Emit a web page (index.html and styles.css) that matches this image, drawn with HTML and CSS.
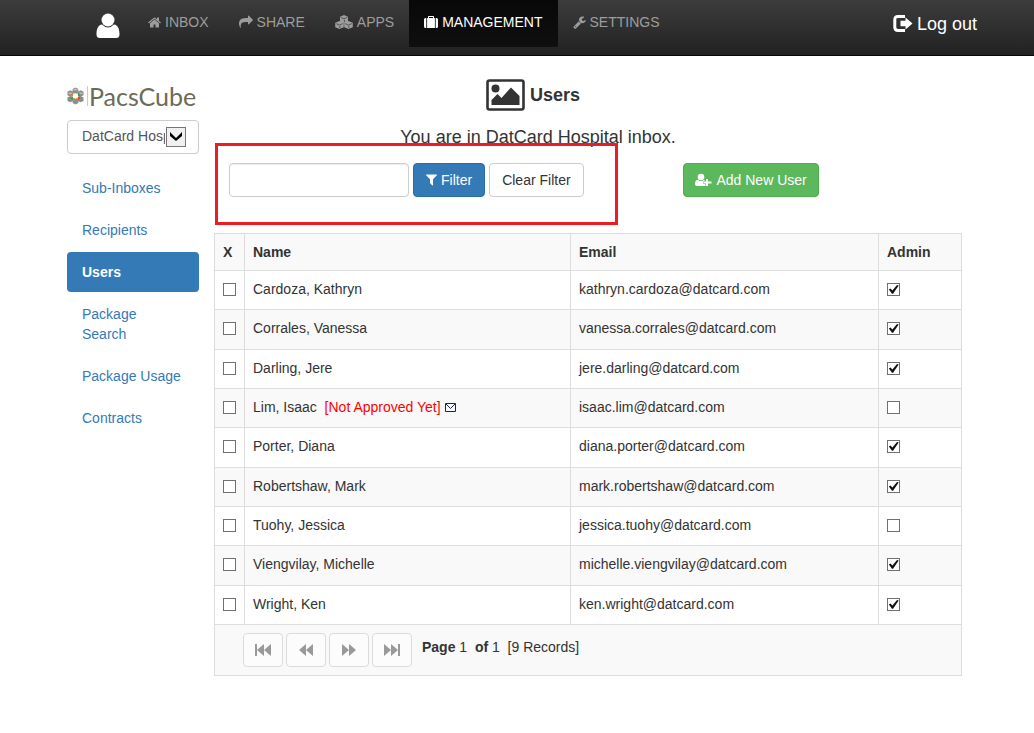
FILE: index.html
```
<!DOCTYPE html>
<html lang="en">
<head>
    <meta charset="UTF-8">
    <meta name="viewport" content="width=device-width, initial-scale=1.0">
    <title>PacsCube - Users</title>
    <link rel="stylesheet" href="styles.css">
</head>
<body>
    <!-- Top bar -->
    <header class="navbar">
        <svg class="avatar" viewBox="0 0 24 26"><ellipse cx="12" cy="7" rx="6.500" ry="6.500"/><path d="M6 11.500C2 12 .5 16 .5 21.500Q.5 25 4 25H20Q23.500 25 23.500 21.500C23.500 16 22 12 18 11.500Q12 17.500 6 11.500Z"/></svg>
        <nav class="top-menu">
            <a href="#"><svg class="icon icon-home" viewBox="64 128 1664 1536"><path d="M1472 992v480q0 26-19 45t-45 19h-384v-384h-256v384h-384q-26 0-45-19t-19-45v-480q0-1 .5-3t.5-3l575-474 575 474q1 2 1 6zm223-69l-62 74q-8 9-21 11h-3q-13 0-21-7l-692-577-692 577q-12 8-24 7-13-2-21-11l-62-74q-8-10-7-23.500t11-21.500l719-599q32-26 76-26t76 26l244 204v-195q0-14 9-23t23-9h192q14 0 23 9t9 23v408l219 182q10 8 11 21.500t-7 23.500z"/></svg>INBOX</a>
            <a href="#"><svg class="icon" viewBox="0 0 1792 1792"><path d="M1792 640q0 26-19 45l-512 512q-19 19-45 19t-45-19-19-45v-256h-224q-98 0-175.500 6t-154 21.500-133 42.500-105.500 69.500-80 101-48.500 138.500-17.500 181q0 55 5 123 0 6 2.500 23.500t2.500 26.500q0 15-8.500 25t-23.500 10q-16 0-28-17-7-9-13-22t-13.500-30-10.500-24q-127-285-127-451 0-199 53-333 162-403 875-403h224v-256q0-26 19-45t45-19 45 19l512 512q19 19 19 45z"/></svg>SHARE</a>
            <a href="#"><svg class="icon icon-cubes" viewBox="0 0 18 14"><path d="M9 0l4 1.800v4.400L9 8 5 6.200V1.800zM4.500 6l4.300 1.800v4.500L4.500 14 .2 12.300V7.800zM13.500 6l4.300 1.800v4.500L13.500 14l-4.300-1.700V7.800z"/><path class="cube-edge" d="M5.800 2.400L9 3.800l3.200-1.400M9.400 4.800v2.400M1.300 8.700l3.200 1.400 3.200-1.400M4.900 11v2.100M10.300 8.700l3.200 1.400 3.200-1.400M13.900 11v2.100"/></svg>APPS</a>
            <a href="#" class="active"><svg class="icon" viewBox="0 0 14 14"><path d="M2.300 3v10H1.500Q0 13 0 11.500v-7Q0 3 1.500 3zM11.700 3h.8Q14 3 14 4.500v7q0 1.500-1.500 1.500h-.8zM3.100 13V3H4V1.700Q4 1 4.700 1h4.600q.7 0 .7.700V3h.9v10zM5 2v1h4V2z"/></svg>MANAGEMENT</a>
            <a href="#"><svg class="icon icon-home" viewBox="64 64 1664 1728"><path d="M448 1472q0-26-19-45t-45-19-45 19-19 45 19 45 45 19 45-19 19-45zm644-420l-682 682q-37 37-90 37-52 0-91-37l-106-108q-38-36-38-90 0-53 38-91l681-681q39 98 114.500 173.500t173.500 114.500zm634-435q0 39-23 106-47 134-164.500 217.500t-258.500 83.500q-185 0-316.500-131.500t-131.500-316.500 131.500-316.500 316.500-131.500q58 0 121.500 16.500t107.500 46.500q16 11 16 28t-16 28l-293 169v224l193 107q5-3 79-48.500t135.500-81 70.500-35.500q15 0 23.500 10t8.500 25z"/></svg>SETTINGS</a>
        </nav>
        <a href="#" class="logout"><svg viewBox="0 0 20 18"><path d="M12 1.500H5Q1.800 1.500 1.800 4.700v7.600q0 3.200 3.200 3.200H12" fill="none" stroke="currentColor" stroke-width="3"/><path d="M7.500 5.800h5V2.500L19.500 8.500l-7 6v-3.300h-5z"/></svg>Log out</a>
    </header>

    <div class="container">
        <!-- Left menu -->
        <aside class="sidebar">
            <div class="logo">
                <svg viewBox="0 0 18 18"><g fill="#8d8d8a"><path d="M9 0l3 1.500v4L9 7 6 5.500v-4zM3.500 3l3 1.500v3.800l-3 1.200-3-1.200V4.500zM14.500 3l3 1.500v3.800l-3 1.200-3-1.200V4.500zM3.500 9l3 1.500v3.800l-3 1.200-3-1.200v-3.800zM14.500 9l3 1.500v3.800l-3 1.200-3-1.200v-3.800zM9 11l3 1.500v4L9 18l-3-1.500v-4z"/></g><path d="M3.500 5l3 1-3 1.500-3-1.500zM14.500 5l3 1-3 1.500-3-1.500zM9 1l3 1.200-3 1.300-3-1.300z" fill="#bbb"/><path d="M4 7.500L6.500 5.500v3.500L4 10z" fill="#ef7d2d"/><path d="M6.500 5L9 6.500 11.500 5v2.500h-5z" fill="#e3b43c"/><path d="M11.500 5.500L14 7v3l-2.500-1z" fill="#2fa55b"/><path d="M4 10l2.500-.5V13L4 12z" fill="#2fa55b"/><path d="M11.500 9.500L14 10v2l-2.500 1z" fill="#e2442f"/><path d="M6.500 10.500h5V13L9 12l-2.500 1z" fill="#ef8a2d"/><path d="M9 6l2.500 1.500v3L9 12l-2.500-1.500v-3z" fill="#fff"/></svg>
                <span>PacsCube</span>
            </div>
            <div class="inbox-select">
                <select aria-label="Inbox">
                    <option>DatCard Hospital</option>
                </select>
                <svg class="select-arrow" viewBox="0 0 18 18"><path d="M3 4l6 6 6-6v4l-6 5-6-5z"/></svg>
            </div>
            <nav class="side-menu">
                <a href="#">Sub-Inboxes</a>
                <a href="#">Recipients</a>
                <a href="#" class="active">Users</a>
                <a href="#">Package<br>Search</a>
                <a href="#">Package Usage</a>
                <a href="#">Contracts</a>
            </nav>
        </aside>

        <main>
            <div class="page-title">
                <h1><svg viewBox="0 0 39 32"><rect x="1.500" y="1.500" width="36" height="29" rx="2" fill="none" stroke="currentColor" stroke-width="2.600"/><circle cx="9.500" cy="9.500" r="4"/><path d="M5.500 26v-5l6-6 4 4L25 8.500l8.500 8.500v9z"/></svg>Users</h1>
                <p>You are in DatCard Hospital inbox.</p>
            </div>

            <div class="toolbar">
                <form class="filter-form">
                    <input type="text" class="form-control" aria-label="Filter users">
                    <button type="button" class="btn btn-primary"><svg viewBox="192 192 1408 1536"><path d="M1595 295q17 41-14 70l-493 493v742q0 42-39 59-13 5-25 5-27 0-45-19l-256-256q-19-19-19-45v-486l-493-493q-31-29-14-70 17-39 59-39h1280q42 0 59 39z"/></svg>Filter</button>
                    <button type="button" class="btn btn-default">Clear Filter</button>
                    <div class="highlight"></div>
                </form>
                <button type="button" class="btn btn-success"><svg class="icon-add" viewBox="0 0 17 14"><circle cx="6" cy="4" r="3.300"/><path d="M3 6.800Q0 7 0 11.200 0 13 2 13h8.500v-2H8.500V8H9.500V7.100L9 6.800Q6 9.400 3 6.800zM11 6h2v2.500h3.500v2H13V13h-2v-2.500H9v-2h2z"/></svg>Add New User</button>
            </div>

            <table class="users">
                <thead>
                    <tr><th class="col-check">X</th><th class="col-name">Name</th><th class="col-email">Email</th><th>Admin</th></tr>
                </thead>
                <tbody>
                    <tr>
                        <td><input type="checkbox" aria-label="Select Kathryn Cardoza"></td>
                        <td>Cardoza, Kathryn</td>
                        <td>kathryn.cardoza@datcard.com</td>
                        <td><input type="checkbox" aria-label="Admin" checked></td>
                    </tr>
                    <tr>
                        <td><input type="checkbox" aria-label="Select Vanessa Corrales"></td>
                        <td>Corrales, Vanessa</td>
                        <td>vanessa.corrales@datcard.com</td>
                        <td><input type="checkbox" aria-label="Admin" checked></td>
                    </tr>
                    <tr>
                        <td><input type="checkbox" aria-label="Select Jere Darling"></td>
                        <td>Darling, Jere</td>
                        <td>jere.darling@datcard.com</td>
                        <td><input type="checkbox" aria-label="Admin" checked></td>
                    </tr>
                    <tr>
                        <td><input type="checkbox" aria-label="Select Isaac Lim"></td>
                        <td>Lim, Isaac&nbsp; <span class="pending">[Not Approved Yet]</span> <svg class="mail" viewBox="0 0 11 9"><path d="M.5.5h10v8H.5zM1 1l4.500 4.500L10 1"/></svg></td>
                        <td>isaac.lim@datcard.com</td>
                        <td><input type="checkbox" aria-label="Admin"></td>
                    </tr>
                    <tr>
                        <td><input type="checkbox" aria-label="Select Diana Porter"></td>
                        <td>Porter, Diana</td>
                        <td>diana.porter@datcard.com</td>
                        <td><input type="checkbox" aria-label="Admin" checked></td>
                    </tr>
                    <tr>
                        <td><input type="checkbox" aria-label="Select Mark Robertshaw"></td>
                        <td>Robertshaw, Mark</td>
                        <td>mark.robertshaw@datcard.com</td>
                        <td><input type="checkbox" aria-label="Admin" checked></td>
                    </tr>
                    <tr>
                        <td><input type="checkbox" aria-label="Select Jessica Tuohy"></td>
                        <td>Tuohy, Jessica</td>
                        <td>jessica.tuohy@datcard.com</td>
                        <td><input type="checkbox" aria-label="Admin"></td>
                    </tr>
                    <tr>
                        <td><input type="checkbox" aria-label="Select Michelle Viengvilay"></td>
                        <td>Viengvilay, Michelle</td>
                        <td>michelle.viengvilay@datcard.com</td>
                        <td><input type="checkbox" aria-label="Admin" checked></td>
                    </tr>
                    <tr>
                        <td><input type="checkbox" aria-label="Select Ken Wright"></td>
                        <td>Wright, Ken</td>
                        <td>ken.wright@datcard.com</td>
                        <td><input type="checkbox" aria-label="Admin" checked></td>
                    </tr>
                </tbody>
                <tfoot>
                    <tr>
                        <td colspan="4">
                            <div class="pager">
                                <button type="button" class="btn btn-default" aria-label="First page" disabled><svg viewBox="0 0 16 12"><path d="M0 0h2v12H0zM9 0v12L2 6zM16 0v12L9 6z"/></svg></button>
                                <button type="button" class="btn btn-default" aria-label="Previous page" disabled><svg viewBox="0 0 16 12"><path d="M8 0v12L1 6zM15 0v12L8 6z"/></svg></button>
                                <button type="button" class="btn btn-default" aria-label="Next page" disabled><svg viewBox="0 0 16 12"><path d="M1 0v12l7-6zM8 0v12l7-6z"/></svg></button>
                                <button type="button" class="btn btn-default" aria-label="Last page" disabled><svg viewBox="0 0 16 12"><path d="M0 0v12l7-6zM7 0v12l7-6zM14 0h2v12h-2z"/></svg></button>
                                <p><b>Page</b> 1&nbsp; <b>of</b> 1&nbsp; [9 Records]</p>
                            </div>
                        </td>
                    </tr>
                </tfoot>
            </table>
        </main>
    </div>
</body>
</html>
```
FILE: styles.css
```
* {
    box-sizing: border-box;
}

body {
    margin: 0;
    font-family: "Liberation Sans", Arial, sans-serif;
    font-size: 14px;
    line-height: 20px;
    color: #333;
    background: #fff;
}

a {
    color: #337ab7;
    text-decoration: none;
}

svg {
    fill: currentColor;
}

h1, p {
    margin: 0;
}

/* Top bar */
.navbar {
    display: flex;
    align-items: flex-start;
    height: 56px;
    padding: 0 57px 0 96px;
    background: linear-gradient(#3c3c3c, #222);
    border-bottom: 1px solid #080808;
}

.avatar {
    width: 24px;
    height: 26px;
    margin: 13px 13px 0 0;
    color: #fff;
}

.top-menu {
    display: flex;
}

.top-menu a {
    display: flex;
    align-items: center;
    gap: 4px;
    padding: 12px 15px 15px;
    color: #9d9d9d;
}

.top-menu .active {
    color: #fff;
    background: linear-gradient(#080808, #0f0f0f);
}

.icon {
    width: 14px;
    height: 14px;
}

.icon-home {
    width: 13px;
    height: 13px;
}

.icon-cubes {
    width: 18px;
}

.cube-edge {
    fill: none;
    stroke: #333;
    stroke-width: 0.7;
}

.logout {
    display: flex;
    align-items: center;
    gap: 4px;
    margin-left: auto;
    padding-top: 14px;
    font-size: 18px;
    color: #fff;
}

.logout svg {
    width: 20px;
    height: 18px;
}

/* Page layout */
.container {
    display: grid;
    grid-template-columns: 132px minmax(0, 1fr);
    gap: 15px;
    padding: 22px 72px 40px 67px;
}

.logo {
    display: flex;
    align-items: center;
    gap: 3px;
    height: 36px;
    margin-bottom: 6px;
}

.logo svg {
    flex: none;
    width: 17px;
    height: 18px;
}

.logo span {
    padding-left: 1px;
    border-left: 1px solid #ccc;
    font-family: Lato, sans-serif;
    font-size: 25px;
    color: #6b6b58;
}

.inbox-select {
    position: relative;
    height: 34px;
    border: 1px solid #ccc;
    border-radius: 4px;
}

.inbox-select select {
    width: 100%;
    height: 32px;
    padding: 0 33px 2px 14px;
    appearance: none;
    border: 0;
    background: none;
    font: inherit;
    color: #555;
}

.select-arrow {
    position: absolute;
    top: 6px;
    right: 12px;
    width: 20px;
    height: 20px;
    border: 1px solid #777;
    background: #f0f0f0;
    color: #000;
    pointer-events: none;
}

.side-menu {
    display: flex;
    flex-direction: column;
    gap: 2px;
    margin-top: 14px;
}

.side-menu a {
    padding: 10px 15px;
    border-radius: 4px;
}

.side-menu .active {
    font-weight: bold;
    color: #fff;
    background: #337ab7;
}

/* Title and filter */
.page-title {
    padding-right: 100px;
    text-align: center;
    font-size: 18px;
}

.page-title h1 {
    display: flex;
    justify-content: center;
    align-items: center;
    gap: 5px;
    height: 33px;
    padding-right: 10px;
    font-size: 18px;
}

.page-title h1 svg {
    width: 39px;
    height: 32px;
}

.page-title p {
    padding: 16px 0;
}

.toolbar {
    display: flex;
    align-items: flex-start;
    height: 70px;
    padding: 0 0 0 15px;
}

.filter-form {
    position: relative;
    display: flex;
    flex: 0 0 62%;
    gap: 4px;
}

/* red frame drawn around the filter */
.highlight {
    position: absolute;
    top: -20px;
    left: -14px;
    width: 403px;
    height: 82px;
    border: 3px solid #ed1c24;
    pointer-events: none;
}

.form-control {
    width: 180px;
    height: 34px;
    padding: 6px 12px;
    border: 1px solid #ccc;
    border-radius: 4px;
    box-shadow: inset 0 1px 1px rgba(0,0,0,0.075);
    font: inherit;
}

.btn {
    display: flex;
    align-items: center;
    gap: 4px;
    height: 34px;
    padding: 6px 12px;
    border: 1px solid #ccc;
    border-radius: 4px;
    font: inherit;
    color: #333;
    white-space: nowrap;
    cursor: pointer;
}

.btn svg {
    width: 11px;
    height: 12px;
}

.btn .icon-add {
    width: 17px;
    height: 14px;
}

.btn-default {
    background: #fff;
}

.btn-primary {
    color: #fff;
    background: #337ab7;
    border-color: #2e6da4;
}

.btn-success {
    padding: 6px 11px;
    color: #fff;
    background: #5cb85c;
    border-color: #4cae4c;
}

/* Users table */
.users {
    width: 100%;
    table-layout: fixed;
    border-collapse: collapse;
    border: 1px solid #ddd;
}

.users th, .users td {
    padding: 8px;
    border: 1px solid #ddd;
    text-align: left;
    vertical-align: top;
}

.users th, .users tbody tr:nth-child(even), .users tfoot {
    background: #f9f9f9;
}

.users tbody tr {
    height: 39px;
}

.users tbody tr:nth-child(3n+2) {
    height: 40px;
}

.col-check {
    width: 30px;
}

.col-name {
    width: 326px;
}

.col-email {
    width: 308px;
}

.users input {
    display: grid;
    place-items: center;
    width: 13px;
    height: 13px;
    margin: 4px 0 0;
    appearance: none;
    border: 1px solid #707070;
    background: #fff;
}

.users input:checked::before {
    content: "";
    width: 11px;
    height: 11px;
    background: #111;
    clip-path: polygon(8% 50%, 22% 40%, 40% 58%, 82% 10%, 97% 14%, 46% 88%, 36% 88%);
}

.pending {
    color: #f00;
}

.mail {
    width: 11px;
    height: 9px;
    margin-left: 1px;
    fill: none;
    stroke: #1a2a3a;
}

.pager {
    display: flex;
    gap: 3px;
    padding-left: 20px;
}

.pager .btn {
    width: 40px;
    justify-content: center;
    opacity: 0.65;
}

.pager svg {
    flex: none;
    width: 16px;
    height: 12px;
    color: #666;
}

.pager p {
    margin: 4px 0 0 7px;
}
```
